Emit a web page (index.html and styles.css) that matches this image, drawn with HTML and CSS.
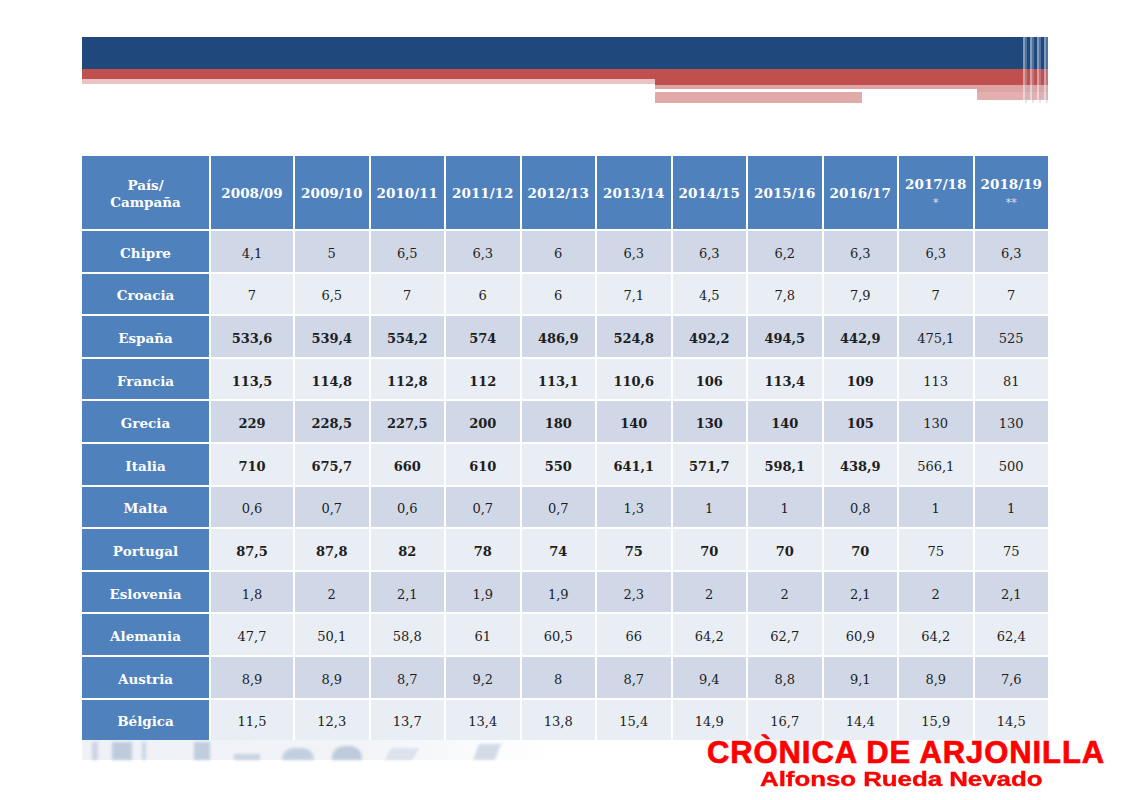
FILE: index.html
```html
<!DOCTYPE html>
<html lang="es">
<head>
<meta charset="utf-8">
<title>Producción de aceite de oliva</title>
<link rel="stylesheet" href="styles.css">
</head>
<body>
<div class="page">
  <div class="banner">
    <div class="bar-blue"></div>
    <div class="bar-lower">
      <div class="lower-left">
        <div class="ll-red"></div>
        <div class="ll-pink"></div>
      </div>
      <div class="lower-right">
        <div class="lr-red"></div>
        <div class="lr-pink"></div>
        <div class="lr-row">
          <div class="lr-white"></div>
          <div class="lr-pink2"></div>
        </div>
        <div class="lr-row lr-bottom">
          <div class="lr-pinkbar"></div>
          <div class="lr-gap"></div>
          <div class="lr-pinkend"></div>
        </div>
      </div>
    </div>
    <div class="fringe"></div>
  </div>

  <table class="data">
    <colgroup>
      <col class="c-first"><col class="c-wide">
      <col><col><col><col><col><col><col><col><col><col>
    </colgroup>
    <thead>
      <tr>
        <th>País/<br>Campaña</th>
        <th>2008/09</th><th>2009/10</th><th>2010/11</th><th>2011/12</th><th>2012/13</th>
        <th>2013/14</th><th>2014/15</th><th>2015/16</th><th>2016/17</th>
        <th>2017/18<br><span class="star">*</span></th>
        <th>2018/19<br><span class="star">**</span></th>
      </tr>
    </thead>
    <tbody>
      <tr><th>Chipre</th><td>4,1</td><td>5</td><td>6,5</td><td>6,3</td><td>6</td><td>6,3</td><td>6,3</td><td>6,2</td><td>6,3</td><td>6,3</td><td>6,3</td></tr>
      <tr><th>Croacia</th><td>7</td><td>6,5</td><td>7</td><td>6</td><td>6</td><td>7,1</td><td>4,5</td><td>7,8</td><td>7,9</td><td>7</td><td>7</td></tr>
      <tr class="strong"><th>España</th><td>533,6</td><td>539,4</td><td>554,2</td><td>574</td><td>486,9</td><td>524,8</td><td>492,2</td><td>494,5</td><td>442,9</td><td class="n">475,1</td><td class="n">525</td></tr>
      <tr class="strong"><th>Francia</th><td>113,5</td><td>114,8</td><td>112,8</td><td>112</td><td>113,1</td><td>110,6</td><td>106</td><td>113,4</td><td>109</td><td class="n">113</td><td class="n">81</td></tr>
      <tr class="strong"><th>Grecia</th><td>229</td><td>228,5</td><td>227,5</td><td>200</td><td>180</td><td>140</td><td>130</td><td>140</td><td>105</td><td class="n">130</td><td class="n">130</td></tr>
      <tr class="strong"><th>Italia</th><td>710</td><td>675,7</td><td>660</td><td>610</td><td>550</td><td>641,1</td><td>571,7</td><td>598,1</td><td>438,9</td><td class="n">566,1</td><td class="n">500</td></tr>
      <tr><th>Malta</th><td>0,6</td><td>0,7</td><td>0,6</td><td>0,7</td><td>0,7</td><td>1,3</td><td>1</td><td>1</td><td>0,8</td><td>1</td><td>1</td></tr>
      <tr class="strong"><th>Portugal</th><td>87,5</td><td>87,8</td><td>82</td><td>78</td><td>74</td><td>75</td><td>70</td><td>70</td><td>70</td><td class="n">75</td><td class="n">75</td></tr>
      <tr><th>Eslovenia</th><td>1,8</td><td>2</td><td>2,1</td><td>1,9</td><td>1,9</td><td>2,3</td><td>2</td><td>2</td><td>2,1</td><td>2</td><td>2,1</td></tr>
      <tr><th>Alemania</th><td>47,7</td><td>50,1</td><td>58,8</td><td>61</td><td>60,5</td><td>66</td><td>64,2</td><td>62,7</td><td>60,9</td><td>64,2</td><td>62,4</td></tr>
      <tr><th>Austria</th><td>8,9</td><td>8,9</td><td>8,7</td><td>9,2</td><td>8</td><td>8,7</td><td>9,4</td><td>8,8</td><td>9,1</td><td>8,9</td><td>7,6</td></tr>
      <tr><th>Bélgica</th><td>11,5</td><td>12,3</td><td>13,7</td><td>13,4</td><td>13,8</td><td>15,4</td><td>14,9</td><td>16,7</td><td>14,4</td><td>15,9</td><td>14,5</td></tr>
    </tbody>
  </table>

  <div class="ghost">
    <span class="g g1"></span><span class="g g2"></span><span class="g g3"></span>
    <span class="g g4"></span><span class="g g5"></span><span class="g g6"></span>
    <span class="g g7"></span><span class="g g8"></span><span class="g g9"></span>
  </div>

  <div class="credit">
    <div class="credit-title">CRÒNICA DE ARJONILLA</div>
    <div class="credit-author">Alfonso Rueda Nevado</div>
  </div>
</div>
</body>
</html>
```

FILE: styles.css
```css
* { box-sizing: border-box; }

html, body {
  margin: 0;
  padding: 0;
  background: #ffffff;
}

.page {
  position: relative;
  width: 1131px;
  height: 800px;
  overflow: hidden;
  font-family: "DejaVu Serif", "Liberation Serif", serif;
}

/* ---------- top banner ---------- */
.banner {
  position: relative;
  margin: 37px 0 0 82px;
  width: 966px;
}

.bar-blue {
  height: 32px;
  background: #1f497d;
}

.bar-lower {
  display: flex;
  height: 34px;
}

.lower-left {
  width: 573px;
}

.ll-red {
  height: 10px;
  background: #c0504d;
}

.ll-pink {
  height: 5px;
  background: #ebc3c2;
}

.lower-right {
  flex: 1;
  display: flex;
  flex-direction: column;
}

.lr-red {
  height: 16px;
  background: #c0504d;
}

.lr-pink {
  height: 4px;
  background: #dea3a2;
}

.lr-row {
  display: flex;
  height: 3px;
}

.lr-white {
  width: 322px;
  background: #ffffff;
}

.lr-pink2 {
  flex: 1;
  background: #dea3a2;
}

.lr-bottom {
  height: 11px;
}

.lr-pinkbar {
  width: 207px;
  background: #e1a9a8;
}

.lr-gap {
  width: 115px;
}

.lr-pinkend {
  flex: 1;
  height: 8px;
  background: #e4b0af;
}

.fringe {
  position: absolute;
  top: 0;
  right: -4px;
  width: 32px;
  height: 66px;
  background:
    repeating-linear-gradient(90deg,
      rgba(255,255,255,0.0) 0px,
      rgba(255,255,255,0.0) 3px,
      rgba(255,255,255,0.45) 3px,
      rgba(255,255,255,0.45) 5px,
      rgba(170,190,220,0.35) 5px,
      rgba(170,190,220,0.35) 7px);
}

/* ---------- table ---------- */
.data {
  margin: 51px 0 0 80px;
  border-collapse: separate;
  border-spacing: 2px;
  table-layout: fixed;
  width: 970px;
}

.c-first { width: 127px; }
.c-wide  { width: 82px; }

.data thead th {
  height: 73px;
  background: #4f81bd;
  color: #ffffff;
  font-size: 13.5px;
  font-weight: bold;
  line-height: 17px;
  text-align: center;
  vertical-align: middle;
  padding: 2px 2px 0;
}

.star {
  font-size: 11px;
  font-weight: normal;
  color: #d5e0ef;
}

.data tbody tr {
  height: 40.6px;
}

.data tbody th {
  background: #4f81bd;
  color: #ffffff;
  font-size: 13.5px;
  font-weight: bold;
  text-align: center;
  padding: 3px 0 0;
}

.data tbody td {
  text-align: center;
  font-size: 13px;
  color: #1e1e1e;
  padding: 4px 0 0;
}

.data tbody tr:nth-child(odd) td {
  background: #d0d8e8;
}

.data tbody tr:nth-child(even) td {
  background: #e9edf4;
}

.data tr.strong td {
  font-weight: bold;
}

.data tr.strong td.n {
  font-weight: normal;
}

/* ---------- faded picture strip ---------- */
.ghost {
  display: flex;
  align-items: flex-end;
  margin: -2px 0 0 82px;
  width: 470px;
  height: 20px;
  background: linear-gradient(90deg, #eef1f6 0%, #f2f4f8 60%, #ffffff 100%);
}

.g {
  display: block;
  height: 18px;
  filter: blur(1.5px);
  background: #c3cfe0;
}

.g1 { width: 6px; margin-left: 10px; background: #ccd5e3; }
.g2 { width: 20px; margin-left: 14px; background: #bfcbdc; }
.g3 { width: 4px; margin-left: 10px; background: #cbd4e3; }
.g4 { width: 16px; margin-left: 48px; background: #c0cddd; }
.g5 { width: 26px; height: 6px; margin-left: 24px; background: #c9d3e2; }
.g6 { width: 32px; height: 12px; margin-left: 22px; border-radius: 12px 12px 0 0; background: #c3cfe0; }
.g7 { width: 30px; height: 14px; margin-left: 18px; border-radius: 12px 12px 0 0; background: #bfcbdd; }
.g8 { width: 28px; height: 12px; margin-left: 26px; background: #dde3ed; transform: skewX(-30deg); }
.g9 { width: 22px; height: 16px; margin-left: 60px; background: #d3dbe7; transform: skewX(-20deg); }

/* ---------- credit watermark ---------- */
.credit {
  position: absolute;
  left: 707px;
  top: 736px;
  width: 400px;
  font-family: "Liberation Sans", Arial, sans-serif;
  font-weight: bold;
  color: #ff0000;
}

.credit-title {
  font-size: 31px;
  line-height: 34px;
  letter-spacing: 0.9px;
  white-space: nowrap;
  -webkit-text-stroke: 0.7px #ff0000;
}

.credit-author {
  margin-left: 53px;
  font-size: 20px;
  line-height: 19px;
  white-space: nowrap;
  transform: scaleX(1.29);
  transform-origin: left center;
  -webkit-text-stroke: 0.4px #ff0000;
}
```
